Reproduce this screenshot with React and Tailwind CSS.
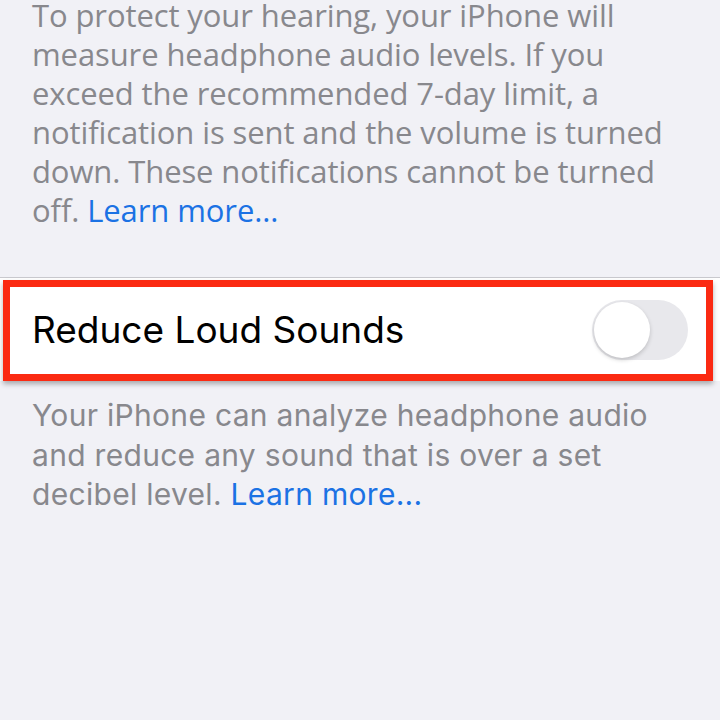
export default function App() {
  return (
    <div
      className="w-[720px] h-[720px] overflow-hidden bg-[#f1f1f6]"
      style={{ fontFamily: "Inter, 'Noto Sans', sans-serif" }}
    >
      {/* footer of the previous group */}
      <p
        className="px-[32px] -mt-[4px] text-[31px] leading-[39px] text-[#88888d] tracking-[-0.1px] whitespace-nowrap"
        style={{ fontFamily: "'Open Sans', sans-serif" }}
      >
        To protect your hearing, your iPhone will
        <br />
        measure headphone audio levels. If you
        <br />
        exceed the recommended 7-day limit, a
        <br />
        notification is sent and the volume is turned
        <br />
        down. These notifications cannot be turned
        <br />
        off. <span className="text-[#1b72e4]">Learn more...</span>
      </p>

      {/* toggle row */}
      <div className="mt-[47px] border-t border-[#c9c9ce] bg-white relative">
        <div className="flex items-center h-[103px] pl-[32px] pr-[32px]">
          <span className="text-[37px] text-black tracking-[0px]">Reduce Loud Sounds</span>
          <div className="ml-auto w-[96px] h-[60px] rounded-full bg-[#e8e8ec] p-[2px]">
            <div className="w-[56px] h-[56px] rounded-full bg-white shadow-[0_2px_4px_rgba(0,0,0,0.18)]" />
          </div>
        </div>
        <div className="absolute left-[3px] w-[710px] top-[2px] h-[101px] border-[7px] border-[#fb2a12] shadow-[0_3px_5px_rgba(0,0,0,0.3)]" />
      </div>

      <p className="px-[32px] mt-[15px] text-[30px] leading-[39.5px] text-[#88888d] tracking-[0.3px] whitespace-nowrap">
        Your iPhone can analyze headphone audio
        <br />
        and reduce any sound that is over a set
        <br />
        decibel level. <span className="text-[#1b72e4]">Learn more...</span>
      </p>
    </div>
  );
}
